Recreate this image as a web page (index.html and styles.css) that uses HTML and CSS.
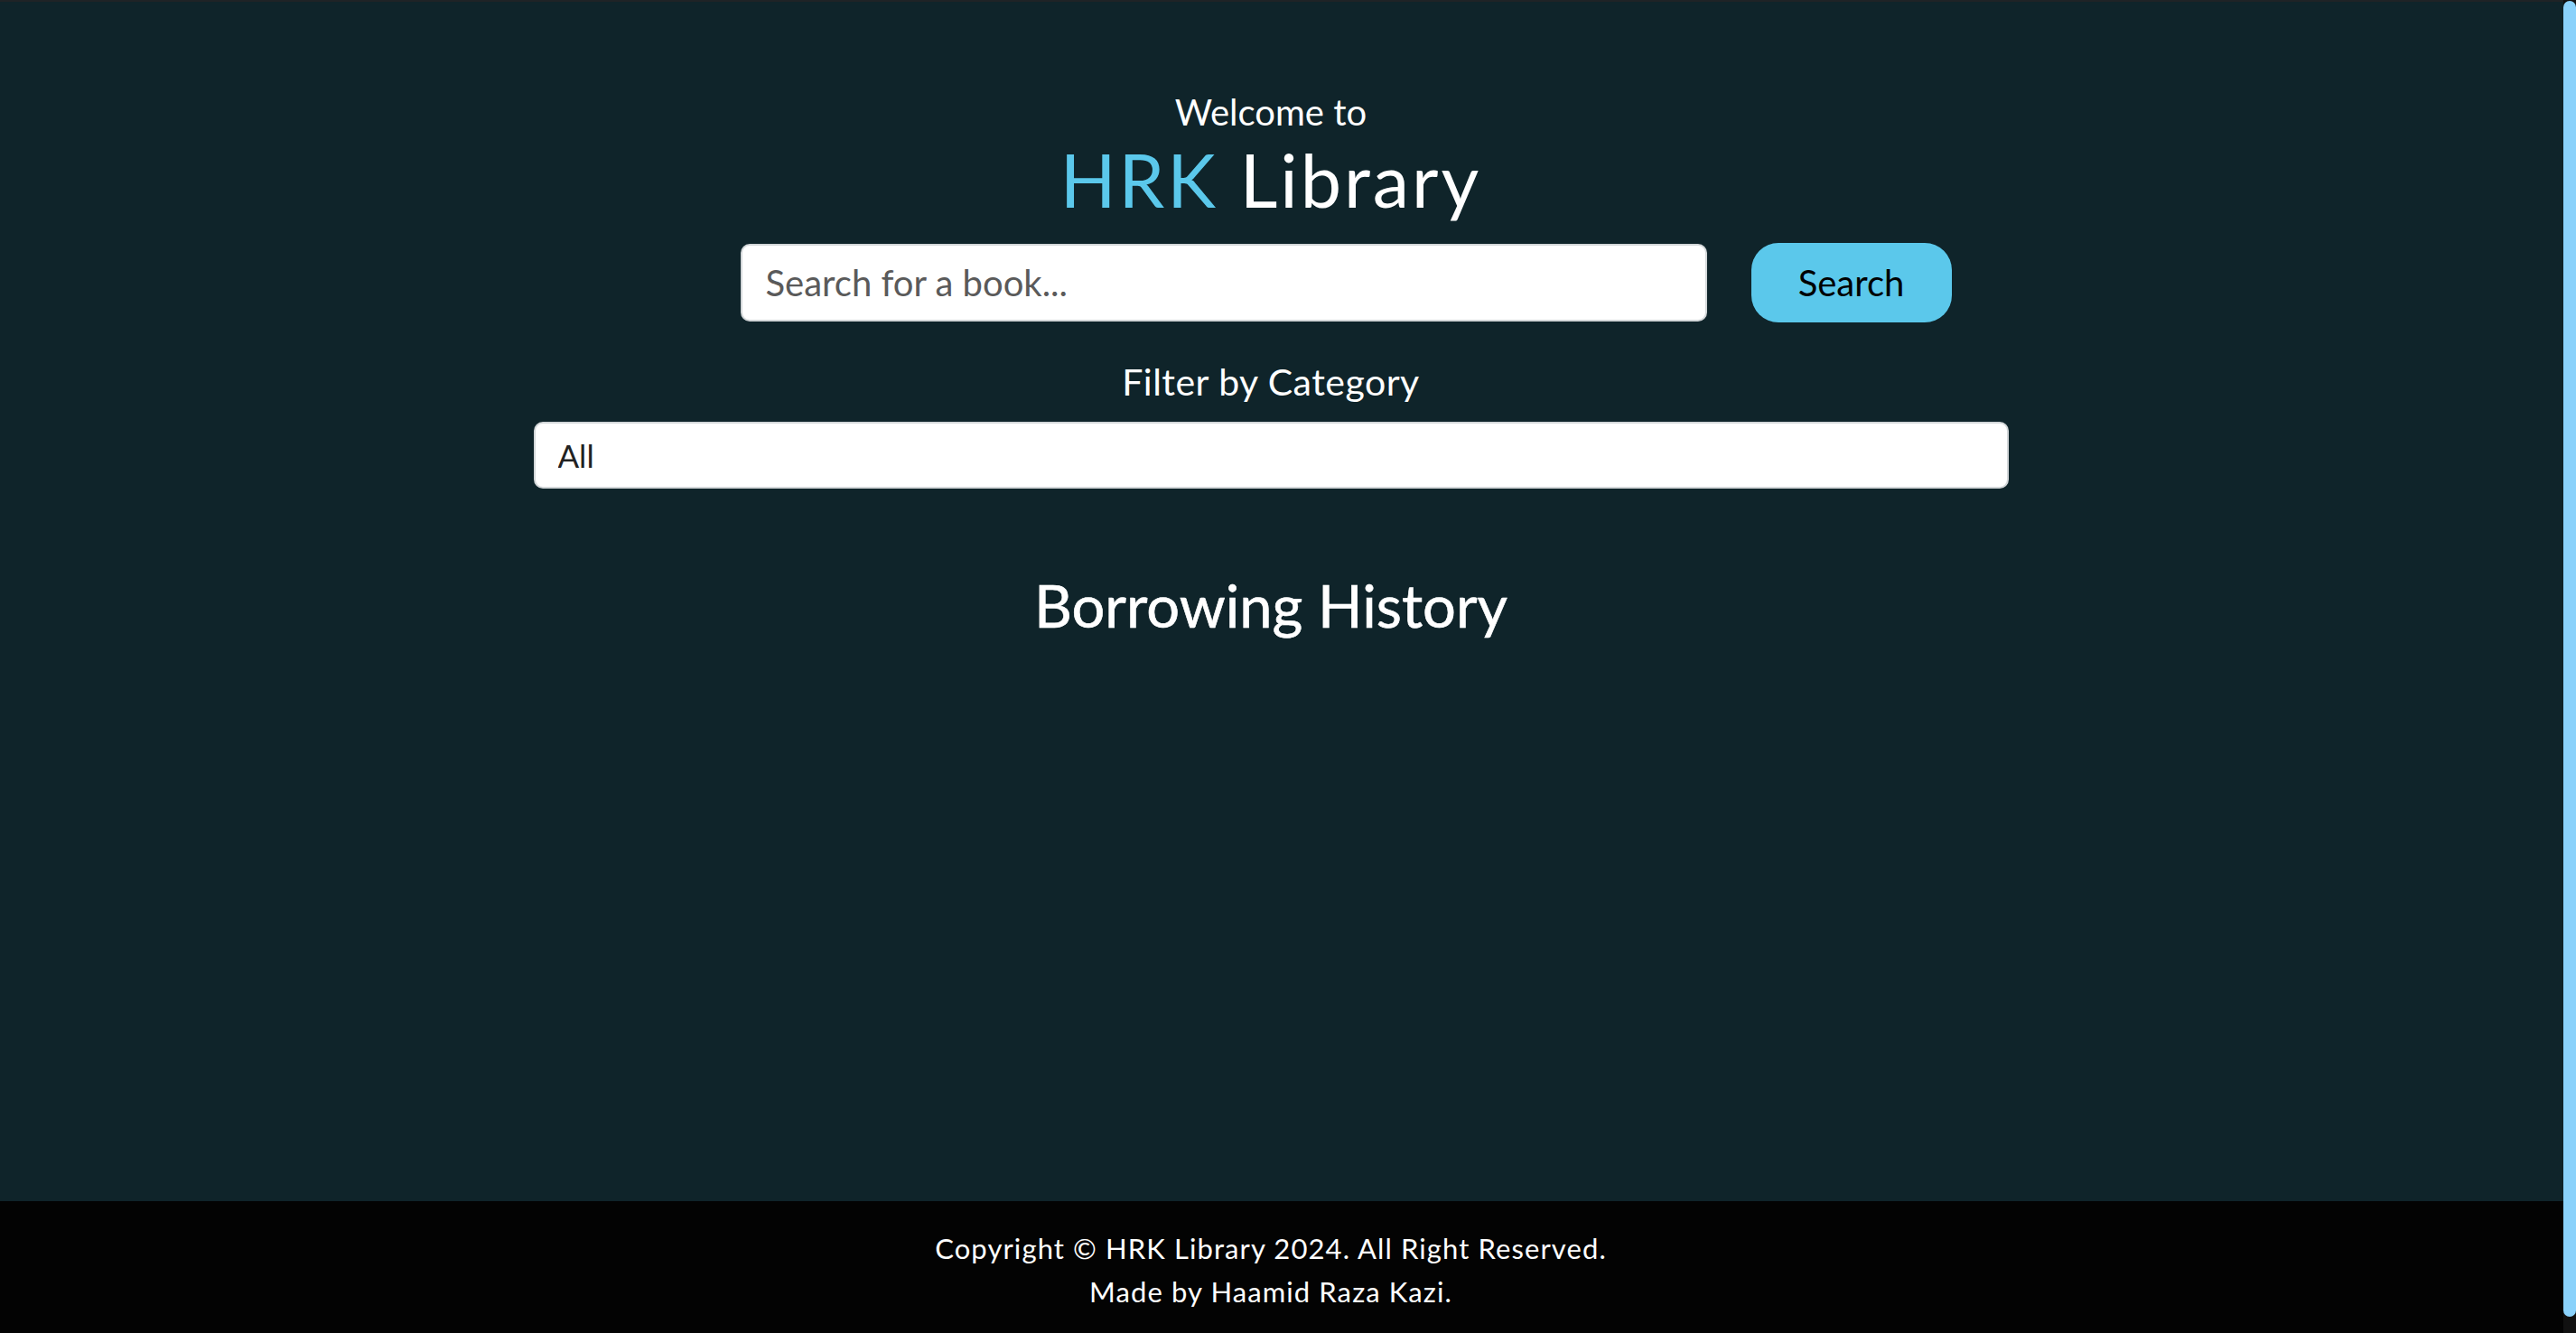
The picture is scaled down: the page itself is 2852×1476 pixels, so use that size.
FILE: index.html
```html
<!DOCTYPE html>
<html lang="en">
<head>
<meta charset="utf-8">
<title>HRK Library</title>
<link rel="stylesheet" href="styles.css">
</head>
<body>
<main class="main">
  <header class="hero">
    <h2 class="welcome">Welcome to</h2>
    <h1 class="brand"><span class="brand-accent">HRK</span> Library</h1>
  </header>
  <form class="search-row">
    <input class="search-input" type="text" placeholder="Search for a book...">
    <button class="search-btn" type="button">Search</button>
  </form>
  <section class="filter">
    <h3 class="filter-title">Filter by Category</h3>
    <select class="filter-select">
      <option>All</option>
    </select>
  </section>
  <section class="history">
    <h2 class="history-title">Borrowing History</h2>
  </section>
</main>
<footer class="footer">
  <p class="footer-line">Copyright © HRK Library 2024. All Right Reserved.</p>
  <p class="footer-line">Made by Haamid Raza Kazi.</p>
</footer>
<div class="scrollbar" aria-hidden="true"><div class="scrollbar-thumb"></div></div>
</body>
</html>
```

FILE: styles.css
```css
html {
  background: #0f242a;
}
body {
  margin: 0;
  background: #0f242a;
  font-family: "Lato", "Open Sans", sans-serif;
  color: #ffffff;
  border-top: 2px solid #1f2326;
}
.main {
  box-sizing: border-box;
  min-height: 1328px;
  padding: 102px 38px 0 0;
  display: flex;
  flex-direction: column;
  align-items: center;
}
.hero {
  display: flex;
  flex-direction: column;
  align-items: center;
  gap: 14px;
}
.welcome {
  margin: 0;
  font-size: 40px;
  line-height: 1;
  font-weight: 400;
}
.brand {
  margin: 0;
  font-size: 81px;
  line-height: 1;
  font-weight: 400;
  letter-spacing: 3px;
}
.brand-accent {
  color: #5bc8eb;
}
.search-row {
  margin: 30px 0 0;
  padding-left: 166px;
  display: flex;
  align-items: center;
  gap: 49px;
}
.search-input {
  box-sizing: border-box;
  width: 1070px;
  height: 86px;
  border: 2px solid #d3d7d9;
  border-radius: 10px;
  padding: 0 26px;
  font-family: inherit;
  font-size: 40px;
  color: #333;
  background: #fff;
  outline: none;
}
.search-input::placeholder {
  color: #5a5a5a;
}
.search-btn {
  box-sizing: border-box;
  width: 222px;
  height: 88px;
  border: none;
  border-radius: 30px;
  background: #5bc8eb;
  color: #000;
  font-family: inherit;
  font-size: 40px;
  padding: 0;
}
.filter {
  margin-top: 45px;
  display: flex;
  flex-direction: column;
  align-items: center;
  gap: 24px;
}
.filter-title {
  margin: 0;
  font-size: 41px;
  line-height: 1;
  font-weight: 400;
  letter-spacing: 0.5px;
}
.filter-select {
  box-sizing: border-box;
  width: 1633px;
  height: 74px;
  border: 2px solid #d3d7d9;
  border-radius: 10px;
  padding: 0 25px;
  background: #fff;
  color: #222;
  font-family: inherit;
  font-size: 35px;
  -webkit-appearance: none;
  appearance: none;
  outline: none;
}
.history {
  margin-top: 97px;
}
.history-title {
  margin: 0;
  font-size: 65px;
  line-height: 1;
  font-weight: 400;
  -webkit-text-stroke: 0.6px #fff;
}
.footer {
  background: #030303;
  padding: 28px 38px 40px 0;
  text-align: center;
  border-bottom: 2px solid #3a3545;
}
.footer-line {
  margin: 0;
  font-size: 31px;
  line-height: 48px;
  color: #fff;
  letter-spacing: 1.1px;
}
.scrollbar {
  position: fixed;
  top: 0;
  right: 0;
  width: 14px;
  height: 100%;
  background: #111111;
}
.scrollbar-thumb {
  margin-top: 1px;
  height: 1457px;
  border-radius: 7px;
  background: #8ad2fb;
}
```
